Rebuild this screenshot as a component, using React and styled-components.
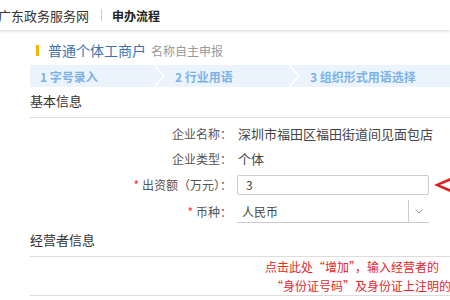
import React from 'react';
import styled, { createGlobalStyle } from 'styled-components';

const GlobalStyle = createGlobalStyle`
  html, body {
    margin: 0;
    background: #fff;
    font-family: "Noto Sans CJK SC", "Noto Sans", sans-serif;
    overflow: hidden;
  }
`;

const steps = ['1 字号录入', '2 行业用语', '3 组织形式用语选择'];

const Header = styled.div`
  height: 30px;
  display: flex;
  align-items: center;
  padding-left: 0;
  margin-left: -2px;
  background: #fff;
  box-shadow: 0 1px 3px rgba(0, 0, 0, 0.18);
  position: relative;
  z-index: 1;
`;

const SiteName = styled.span`
  font-size: 13px;
  color: #333;
`;

const Divider = styled.span`
  width: 1px;
  height: 12px;
  background: #ccc;
  margin: 0 10px 0 12px;
`;

const HeaderTitle = styled.span`
  font-size: 12px;
  font-weight: bold;
  color: #222;
`;

const Main = styled.div`
  padding-left: 30px;
  width: 500px;
`;

const TitleRow = styled.div`
  display: flex;
  align-items: center;
  margin-top: 11px;
  padding-left: 6px;
  height: 18px;
`;

const TitleBar = styled.span`
  width: 3px;
  height: 11px;
  background: #f5b400;
  margin-right: 9px;
`;

const TitleMain = styled.span`
  font-size: 14px;
  color: #3b74b3;
  margin-right: 5px;
`;

const TitleSub = styled.span`
  font-size: 12px;
  color: #999;
`;

const StepBar = styled.div`
  display: flex;
  height: 22px;
  margin-top: 6px;
  background: #ebf4fd;
`;

const Step = styled.div`
  display: flex;
  align-items: center;
  width: ${({ w }) => w}px;
  position: relative;
  padding-left: ${({ pad }) => pad}px;
  box-sizing: border-box;
  font-size: 12px;
  font-weight: bold;
  color: #7db2e6;
`;

const Chevron = styled.svg`
  position: absolute;
  right: 0;
  top: 0;
`;

const SectionTitle = styled.div`
  font-size: 13px;
  color: #333;
  height: 30px;
  line-height: 28px;
  margin-top: ${({ mt }) => mt || 0}px;
`;

const Rule = styled.div`
  height: 1px;
  background: #ddd;
`;

const Form = styled.div`
  display: flex;
  flex-direction: column;
  padding-top: 3px;
`;

const Row = styled.div`
  display: flex;
  align-items: center;
  height: ${({ h }) => h}px;
`;

const Label = styled.div`
  width: 202px;
  text-align: right;
  font-size: 12px;
  color: #555;
  flex-shrink: 0;
`;

const Star = styled.span`
  color: #e33;
  margin-right: 3px;
`;

const Value = styled.div`
  margin-left: 6px;
  font-size: 13px;
  color: #444;
`;

const Input = styled.div`
  margin-left: 5px;
  width: 192px;
  height: 20px;
  box-sizing: border-box;
  border: 1px solid #ccc;
  border-radius: 2px;
  padding-left: 8px;
  font-size: 12px;
  color: #444;
  display: flex;
  align-items: center;
`;

const Select = styled.div`
  margin-left: 5px;
  width: 192px;
  height: 23px;
  box-sizing: border-box;
  border-bottom: 1px solid #ccc;
  display: flex;
  align-items: center;
  font-size: 12px;
  color: #444;
`;

const SelectText = styled.span`
  flex: 1;
  padding-left: 5px;
`;

const SelectToggle = styled.span`
  width: 20px;
  height: 100%;
  border-left: 1px solid #ccc;
  display: flex;
  align-items: center;
  justify-content: center;
`;

const Arrow = styled.svg`
  margin-left: 5px;
`;

const Notice = styled.div`
  display: flex;
  flex-direction: column;
  align-items: flex-start;
  padding-left: ${({ pad }) => pad}px;
`;

const NoticeLine = styled.div`
  font-size: 12px;
  color: #e42a2a;
  white-space: nowrap;
  height: 19px;
  line-height: 19px;
  padding-left: ${({ pad }) => pad}px;
`;

export default function App() {
  return (
    <>
      <GlobalStyle />
      <Header>
        <SiteName>广东政务服务网</SiteName>
        <Divider />
        <HeaderTitle>申办流程</HeaderTitle>
      </Header>
      <Main>
        <TitleRow>
          <TitleBar />
          <TitleMain>普通个体工商户</TitleMain>
          <TitleSub>名称自主申报</TitleSub>
        </TitleRow>
        <StepBar>
          {steps.map((s, i) => (
            <Step key={s} w={i === 2 ? 230 : 135} pad={i === 0 ? 10 : 10}>
              {s}
              {i < 2 && (
                <Chevron width="12" height="22" viewBox="0 0 12 22">
                  <polyline points="1,0 11,11 1,22" fill="none" stroke="#fff" strokeWidth="1.5" />
                </Chevron>
              )}
            </Step>
          ))}
        </StepBar>
        <SectionTitle>基本信息</SectionTitle>
        <Rule />
        <Form>
          <Row h={25}>
            <Label>企业名称：</Label>
            <Value>深圳市福田区福田街道间见面包店</Value>
          </Row>
          <Row h={25}>
            <Label>企业类型：</Label>
            <Value>个体</Value>
          </Row>
          <Row h={27}>
            <Label><Star>*</Star>出资额（万元）：</Label>
            <Input>3</Input>
            <Arrow width="16" height="14" viewBox="0 0 16 14">
              <polygon points="16,0 16,3 6,7 16,11 16,14 0,7" fill="#e01e1e" />
            </Arrow>
          </Row>
          <Row h={27}>
            <Label><Star>*</Star>币种：</Label>
            <Select>
              <SelectText>人民币</SelectText>
              <SelectToggle>
                <svg width="8" height="5" viewBox="0 0 8 5">
                  <polyline points="0.5,0.5 4,4 7.5,0.5" fill="none" stroke="#999" strokeWidth="1" />
                </svg>
              </SelectToggle>
            </Select>
          </Row>
        </Form>
        <SectionTitle mt={1}>经营者信息</SectionTitle>
        <Rule />
        <Notice pad={235}>
          <NoticeLine pad={0}>点击此处“增加”，输入经营者的</NoticeLine>
          <NoticeLine pad={6}>“身份证号码”及身份证上注明的住</NoticeLine>
        </Notice>
        <Rule />
      </Main>
    </>
  );
}
